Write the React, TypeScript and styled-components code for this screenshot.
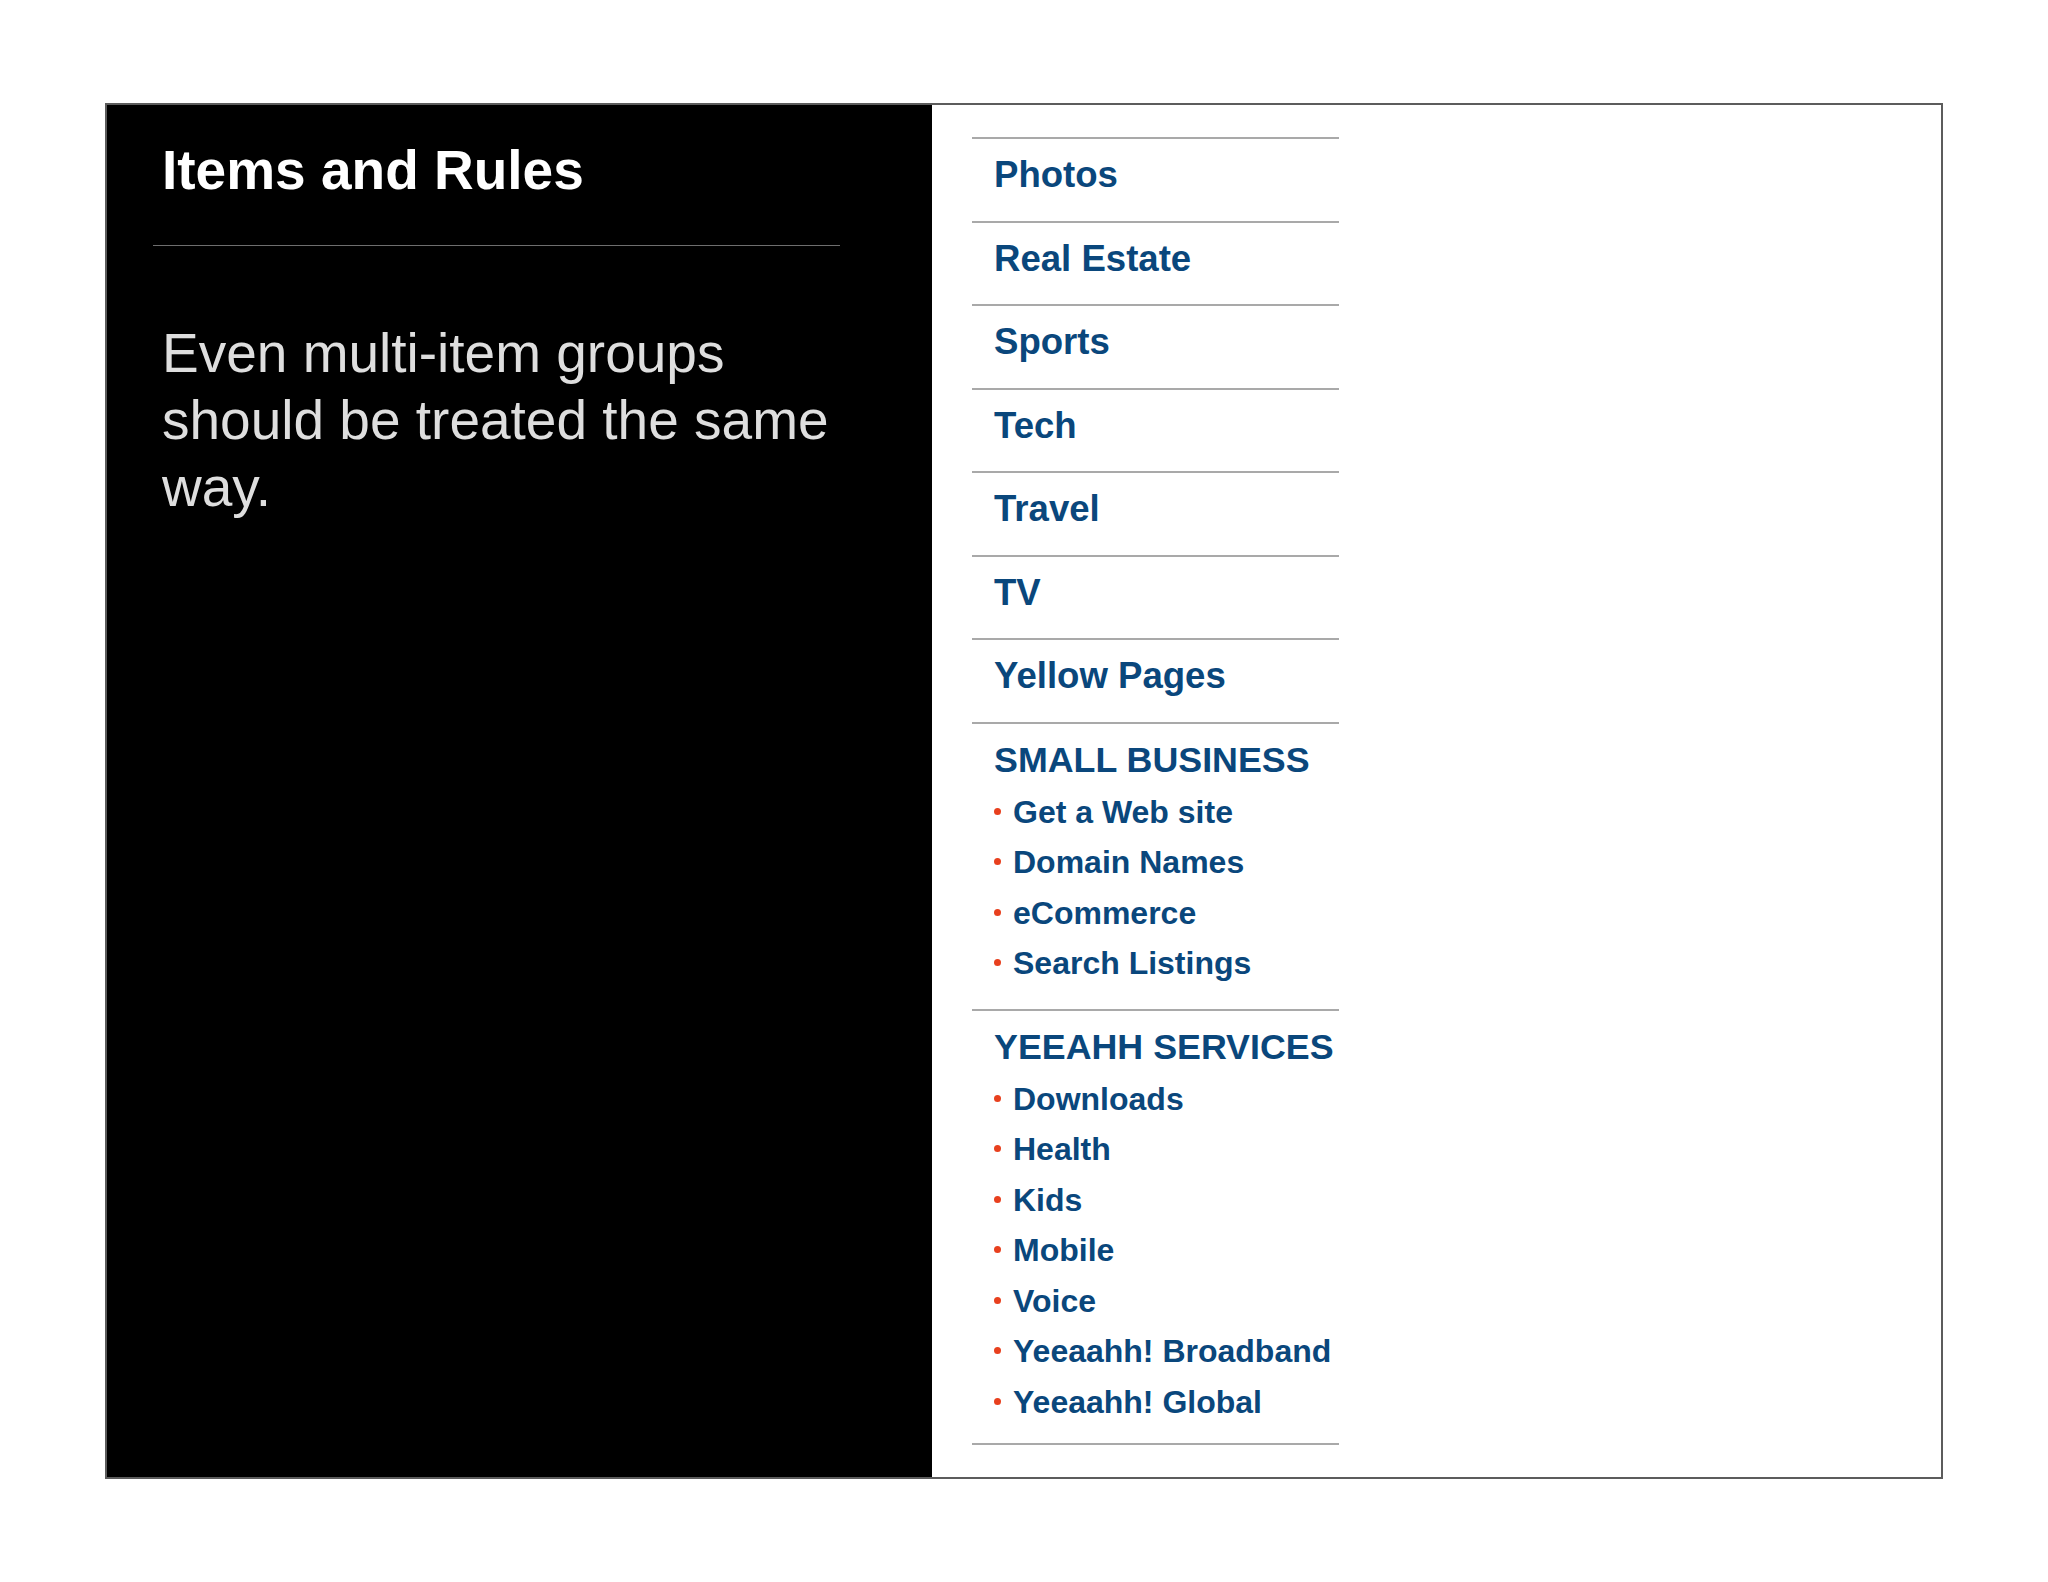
import React from "react";
import styled, { createGlobalStyle } from "styled-components";

const GlobalStyle = createGlobalStyle`
  html, body {
    margin: 0;
    padding: 0;
    background: #ffffff;
  }
  body {
    font-family: "Liberation Sans", Arial, Helvetica, sans-serif;
  }
`;

const simpleItems = ["Photos", "Real Estate", "Sports", "Tech", "Travel", "TV", "Yellow Pages"];

const groups = [
  {
    title: "SMALL BUSINESS",
    links: ["Get a Web site", "Domain Names", "eCommerce", "Search Listings"],
    bottom: 20,
  },
  {
    title: "YEEAHH SERVICES",
    links: ["Downloads", "Health", "Kids", "Mobile", "Voice", "Yeeaahh! Broadband", "Yeeaahh! Global"],
    bottom: 16,
  },
];

function App() {
  return (
    <>
      <GlobalStyle />
      <Slide>
        <Notes>
          <Title>Items and Rules</Title>
          <Rule />
          <Body>Even multi-item groups should be treated the same way.</Body>
        </Notes>
        <Canvas>
          <Menu>
            {simpleItems.map((item) => (
              <Row key={item}>{item}</Row>
            ))}
            {groups.map((group) => (
              <Group key={group.title} $bottom={group.bottom}>
                <GroupTitle>{group.title}</GroupTitle>
                <SubList>
                  {group.links.map((link) => (
                    <SubItem key={link}>{link}</SubItem>
                  ))}
                </SubList>
              </Group>
            ))}
          </Menu>
        </Canvas>
      </Slide>
    </>
  );
}

const Slide = styled.div`
  margin: 103px 0 0 105px;
  width: 1838px;
  height: 1376px;
  box-sizing: border-box;
  border: 2px solid #5c5c5c;
  display: flex;
  background: #ffffff;
`;

const Notes = styled.div`
  width: 825px;
  flex-shrink: 0;
  box-sizing: border-box;
  background: #000000;
  padding: 38px 92px 0 46px;
`;

const Title = styled.h1`
  margin: 0;
  padding-left: 9px;
  font-size: 55px;
  line-height: 54px;
  font-weight: 700;
  color: #ffffff;
`;

const Rule = styled.div`
  margin-top: 48px;
  height: 1px;
  background: #6e6e6e;
`;

const Body = styled.p`
  margin: 74px 0 0;
  padding-left: 9px;
  width: 700px;
  font-size: 55px;
  line-height: 67px;
  font-weight: 400;
  color: #dedede;
`;

const Canvas = styled.div`
  flex: 1;
  padding: 32px 0 0 40px;
`;

const Menu = styled.ul`
  list-style: none;
  margin: 0;
  padding: 0;
  width: 367px;
  border-bottom: 2px solid #a9a9a9;
  color: #0a477c;
`;

const Row = styled.li`
  border-top: 2px solid #a9a9a9;
  padding: 14px 0 23.5px 22px;
  font-size: 36.6px;
  line-height: 44px;
  font-weight: 700;
  white-space: nowrap;
`;

const Group = styled.li<{ $bottom: number }>`
  border-top: 2px solid #a9a9a9;
  padding: 14px 0 ${(p) => p.$bottom}px 22px;
`;

const GroupTitle = styled.div`
  font-size: 35.8px;
  line-height: 44px;
  font-weight: 700;
  white-space: nowrap;
`;

const SubList = styled.ul`
  list-style: none;
  margin: 5px 0 0;
  padding: 0;
`;

const SubItem = styled.li`
  font-size: 32px;
  line-height: 50.5px;
  font-weight: 700;
  white-space: nowrap;

  &::before {
    content: "";
    display: inline-block;
    width: 7px;
    height: 7px;
    border-radius: 50%;
    background: #e8401e;
    margin: 0 12px 0 0;
    vertical-align: 8px;
  }
`;

export default App;
